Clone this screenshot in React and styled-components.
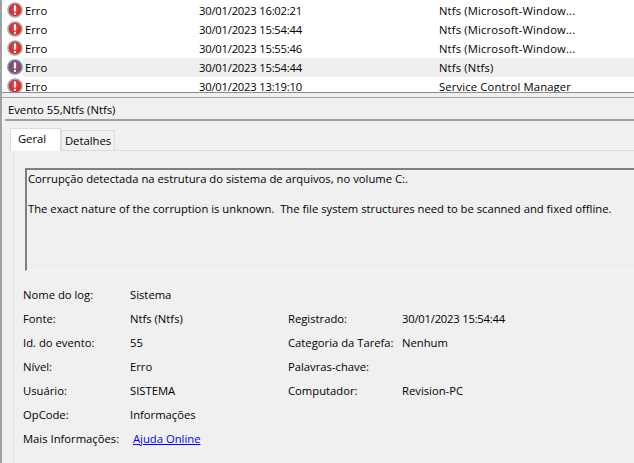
import styled, { createGlobalStyle } from "styled-components";

const GlobalStyle = createGlobalStyle`
  html, body {
    margin: 0;
    padding: 0;
    background: #f0f0f0;
  }
`;

const Window = styled.div`
  width: 634px;
  height: 463px;
  overflow: hidden;
  display: flex;
  flex-direction: column;
  font-family: "Open Sans", "Noto Sans", sans-serif;
  font-size: 11.25px;
  color: #000;
  background: #f0f0f0;
  border-left: 2px solid #a0a0a0;
  box-sizing: border-box;
`;

const EventList = styled.div`
  height: 91px;
  flex: none;
  overflow: hidden;
  padding-top: 1px;
  background: #fff;
  border-bottom: 1px solid #8c8c8c;
`;

const Row = styled.div`
  height: 19px;
  display: grid;
  grid-template-columns: 174px 240px 1fr;
  align-items: center;
  margin-left: 21px;
  padding-left: 2px;
  white-space: nowrap;
  position: relative;
  background: ${({ selected }) => (selected ? "#efefef" : "#fff")};
`;

const IconSlot = styled.span`
  position: absolute;
  left: -16px;
  top: 1px;
  width: 16px;
  height: 16px;
`;

const DateText = styled.span`
  letter-spacing: -0.22px;
  white-space: nowrap;
`;

const SourceText = styled.span`
  letter-spacing: 0.15px;
`;

const DetailPanel = styled.div`
  flex: 1;
  margin-top: 4px;
  border-top: 1px solid #a0a0a0;
  display: flex;
  flex-direction: column;
  min-height: 0;
`;

const PanelTitle = styled.div`
  height: 20px;
  padding-top: 1px;
  line-height: 21px;
  margin-left: 3px;
  padding-left: 3px;
  border-bottom: 2px solid #a0a0a0;
`;

const Tabs = styled.div`
  display: flex;
  align-items: flex-end;
  margin: 7px 0 0 8px;
  height: 22px;
  border-bottom: 1px solid #dcdcdc;
`;

const Tab = styled.div`
  box-sizing: border-box;
  text-align: center;
  border: 1px solid #dcdcdc;
  border-bottom: none;
  background: ${({ active }) => (active ? "#fff" : "#f0f0f0")};
  width: ${({ active }) => (active ? "51px" : "54px")};
  height: ${({ active }) => (active ? "23px" : "20px")};
  line-height: 20px;
  padding-right: ${({ active }) => (active ? "7px" : "0")};
  margin-bottom: ${({ active }) => (active ? "-1px" : "0")};
`;

const TabPane = styled.div`
  flex: 1;
  margin-left: 11px;
  border-left: 1px solid #e3e3e3;
  padding: 17px 0 0 11px;
`;

const MessageBox = styled.div`
  height: 103px;
  box-sizing: border-box;
  border-left: 2px solid #808080;
  border-top: 2px solid #808080;
  border-bottom: 1px solid #f8f8f8;
  padding: 1px 0 0 1px;
`;

const MessageLine = styled.p`
  margin: 0 0 14px;
  height: 16px;
  line-height: 16px;
  white-space: pre;
`;

const Fields = styled.div`
  display: grid;
  grid-template-columns: 107px 158px 114px 1fr;
  grid-auto-rows: 24px;
  align-items: center;
  margin: 11px 0 0 -2px;
`;

const Label = styled.span`
  white-space: nowrap;
`;

const HelpLink = styled.a`
  color: #0000ff;
  text-decoration: underline;
  margin-left: 3px;
  white-space: nowrap;
`;

const ErrorIcon = ({ id, selected }) => (
  <svg width="16" height="16" viewBox="0 0 16 16">
    <defs>
      <radialGradient id={id} cx="50%" cy="45%" r="55%">
        <stop offset="0%" stopColor={selected ? "#a0586e" : "#f04848"} />
        <stop offset="100%" stopColor={selected ? "#7c3f5e" : "#c81e24"} />
      </radialGradient>
    </defs>
    <circle cx="8" cy="8" r="7" fill={`url(#${id})`} stroke={selected ? "#6f8db0" : "#a8a8a8"} strokeWidth="1.7" />
    <rect x="6.9" y="3.2" width="2.2" height="6.4" rx="0.9" fill="#fff" />
    <rect x="6.9" y="10.7" width="2.2" height="2.2" rx="0.9" fill="#fff" />
  </svg>
);

const rows = [
  { date: "30/01/2023 16:02:21", source: "Ntfs (Microsoft-Window..." },
  { date: "30/01/2023 15:54:44", source: "Ntfs (Microsoft-Window..." },
  { date: "30/01/2023 15:55:46", source: "Ntfs (Microsoft-Window..." },
  { date: "30/01/2023 15:54:44", source: "Ntfs (Ntfs)", selected: true },
  { date: "30/01/2023 13:19:10", source: "Service Control Manager" },
];

const App = () => (
  <Window>
    <GlobalStyle />
    <EventList>
      {rows.map((row, i) => (
        <Row key={i} selected={row.selected}>
          <IconSlot>
            <ErrorIcon id={`err${i}`} selected={row.selected} />
          </IconSlot>
          <span>Erro</span>
          <DateText>{row.date}</DateText>
          <SourceText>{row.source}</SourceText>
        </Row>
      ))}
    </EventList>
    <DetailPanel>
      <PanelTitle>Evento 55,Ntfs (Ntfs)</PanelTitle>
      <Tabs>
        <Tab active>Geral</Tab>
        <Tab>Detalhes</Tab>
      </Tabs>
      <TabPane>
        <MessageBox>
          <MessageLine>Corrupção detectada na estrutura do sistema de arquivos, no volume C:.</MessageLine>
          <MessageLine>The exact nature of the corruption is unknown.  The file system structures need to be scanned and fixed offline.</MessageLine>
        </MessageBox>
        <Fields>
          <Label>Nome do log:</Label>
          <Label>Sistema</Label>
          <span />
          <span />
          <Label>Fonte:</Label>
          <Label>Ntfs (Ntfs)</Label>
          <Label>Registrado:</Label>
          <DateText>30/01/2023 15:54:44</DateText>
          <Label>Id. do evento:</Label>
          <Label>55</Label>
          <Label>Categoria da Tarefa:</Label>
          <Label>Nenhum</Label>
          <Label>Nível:</Label>
          <Label>Erro</Label>
          <Label>Palavras-chave:</Label>
          <span />
          <Label>Usuário:</Label>
          <Label>SISTEMA</Label>
          <Label>Computador:</Label>
          <Label>Revision-PC</Label>
          <Label>OpCode:</Label>
          <Label>Informações</Label>
          <span />
          <span />
          <Label>Mais Informações:</Label>
          <HelpLink href="#">Ajuda Online</HelpLink>
        </Fields>
      </TabPane>
    </DetailPanel>
  </Window>
);

export default App;
